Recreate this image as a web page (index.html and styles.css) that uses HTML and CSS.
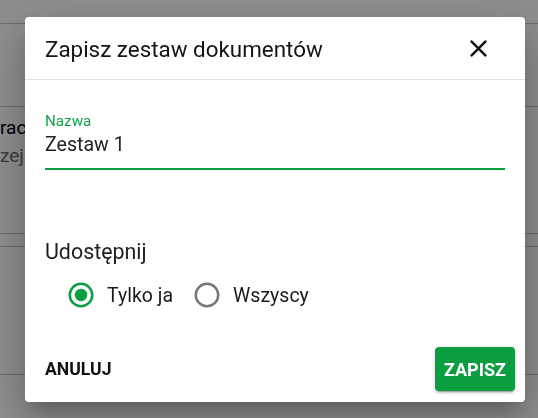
FILE: index.html
```html
<!DOCTYPE html>
<html lang="pl">
<head>
<meta charset="utf-8">
<title>Zapisz zestaw dokumentów</title>
<link rel="stylesheet" href="styles.css">
</head>
<body>
<div class="page">
  <div class="bg-row bg-row-top"></div>
  <div class="bg-row bg-row-a"></div>
  <div class="bg-row bg-row-b">
    <div class="bg-name">race</div>
    <div class="bg-meta">zej</div>
  </div>
  <div class="bg-row bg-row-c"></div>
  <div class="bg-row bg-row-d"></div>
</div>
<div class="backdrop"></div>
<div class="dialog" role="dialog">
  <div class="dialog-header">
    <h2 class="dialog-title">Zapisz zestaw dokumentów</h2>
    <button class="icon-btn" aria-label="Zamknij">
      <svg viewBox="0 0 24 24" width="29" height="29"><path d="M19 6.41L17.59 5 12 10.59 6.41 5 5 6.41 10.59 12 5 17.59 6.41 19 12 13.41 17.59 19 19 17.59 13.41 12z" fill="#111"/></svg>
    </button>
  </div>
  <div class="dialog-body">
    <div class="field">
      <label class="field-label">Nazwa</label>
      <div class="field-input">Zestaw 1</div>
    </div>
    <div class="share-title">Udostępnij</div>
    <div class="radio-group">
      <div class="radio">
        <svg viewBox="0 0 24 24" width="30" height="30"><circle cx="12" cy="12" r="9" fill="none" stroke="#0a9e40" stroke-width="2"/><circle cx="12" cy="12" r="5" fill="#0a9e40"/></svg>
        <span class="radio-label">Tylko ja</span>
      </div>
      <div class="radio">
        <svg viewBox="0 0 24 24" width="30" height="30"><circle cx="12" cy="12" r="9" fill="none" stroke="#767676" stroke-width="2"/></svg>
        <span class="radio-label">Wszyscy</span>
      </div>
    </div>
  </div>
  <div class="dialog-footer">
    <button class="btn-text">ANULUJ</button>
    <button class="btn-primary">ZAPISZ</button>
  </div>
</div>
</body>
</html>
```
FILE: styles.css
```css
html, body {
  margin: 0;
  padding: 0;
}
body {
  width: 538px;
  height: 418px;
  overflow: hidden;
  background: #ffffff;
  font-family: Roboto, "Liberation Sans", sans-serif;
}
.page {
  display: flex;
  flex-direction: column;
}
.bg-row {
  border-bottom: 1px solid #c6c6c6;
}
.bg-row-top { height: 23px; }
.bg-row-a { height: 82px; }
.bg-row-b {
  height: 119px;
  padding-top: 7px;
  font-size: 19px;
  line-height: 28px;
}
.bg-name {
  color: #000;
}
.bg-meta {
  color: #6e6e6e;
}
.bg-row-c { height: 12px; }
.bg-row-d { height: 127px; }

.backdrop {
  position: fixed;
  inset: 0;
  background: rgba(0, 0, 0, 0.44);
}
.dialog {
  position: absolute;
  left: 25px;
  top: 17px;
  width: 500px;
  height: 385px;
  background: #fff;
  border-radius: 4px;
  box-shadow: 0 11px 15px -7px rgba(0,0,0,0.2), 0 24px 38px 3px rgba(0,0,0,0.14), 0 9px 46px 8px rgba(0,0,0,0.12);
  display: flex;
  flex-direction: column;
}
.dialog-header {
  height: 62px;
  border-bottom: 1px solid #e0e0e0;
  display: flex;
  align-items: center;
  justify-content: space-between;
  padding: 0 32px 0 20px;
}
.dialog-title {
  margin: 0;
  font-size: 22.4px;
  font-weight: 400;
  color: #151515;
  padding-top: 2px;
}
.icon-btn {
  border: 0;
  background: none;
  padding: 0;
  width: 29px;
  height: 29px;
  display: flex;
}
.dialog-body {
  padding: 0 20px;
  display: flex;
  flex-direction: column;
}
.field {
  margin-top: 34px;
  border-bottom: 2px solid #0a9e40;
  padding-bottom: 11px;
  display: flex;
  flex-direction: column;
  gap: 4px;
}
.field-label {
  font-size: 15.2px;
  line-height: 15px;
  color: #12a34a;
}
.field-input {
  font-size: 19.6px;
  line-height: 24px;
  color: #222;
}
.share-title {
  margin-top: 69px;
  font-size: 21.4px;
  line-height: 26px;
  color: #1e1e1e;
}
.radio-group {
  margin-top: 15px;
  padding-left: 21px;
  display: flex;
  gap: 19px;
}
.radio {
  display: flex;
  align-items: center;
  gap: 11px;
  height: 30px;
}
.radio svg { display: block; }
.radio-label {
  font-size: 19.5px;
  color: #1a1a1a;
}
.dialog-footer {
  margin-top: auto;
  display: flex;
  align-items: center;
  justify-content: space-between;
  padding: 0 10px 11px 20px;
}
.btn-text {
  border: 0;
  background: none;
  padding: 0;
  font-family: inherit;
  font-size: 17.6px;
  font-weight: 700;
  color: #111;
}
.btn-primary {
  border: 0;
  width: 80px;
  height: 44px;
  border-radius: 4px;
  background: #0a9e40;
  color: #fff;
  font-family: inherit;
  font-size: 18px;
  font-weight: 700;
  box-shadow: 0 3px 1px -2px rgba(0,0,0,0.2), 0 2px 2px 0 rgba(0,0,0,0.14), 0 1px 5px 0 rgba(0,0,0,0.12);
}
```
